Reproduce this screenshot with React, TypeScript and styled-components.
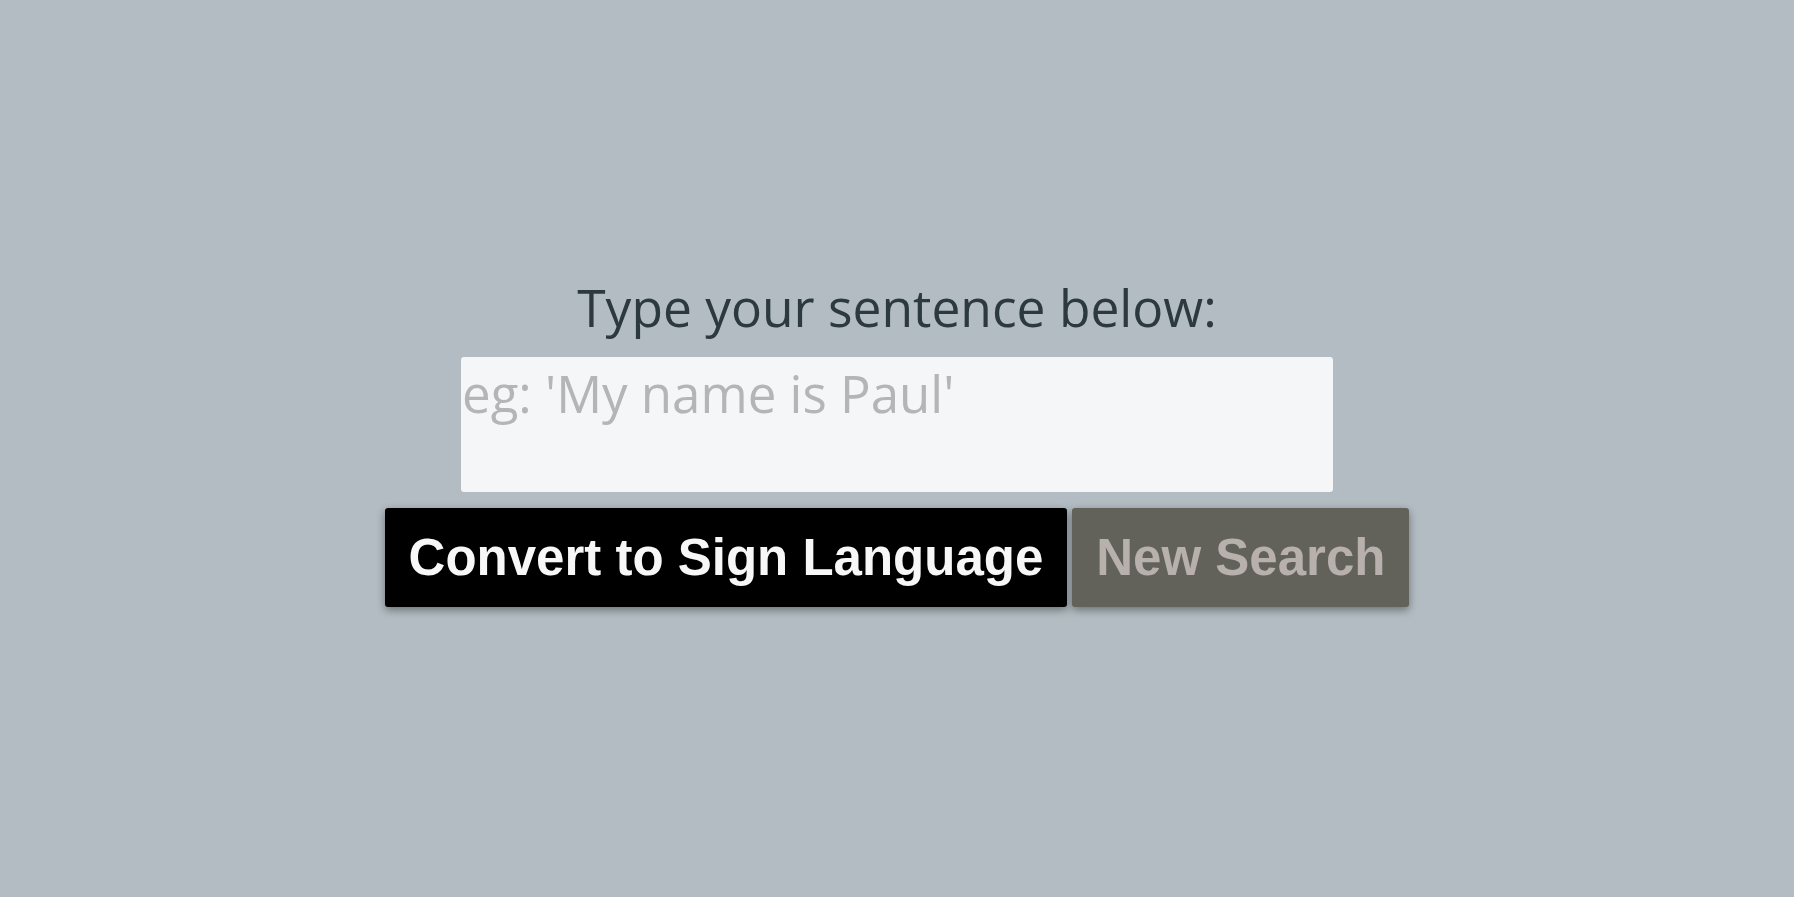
import React from "react";
import styled, { createGlobalStyle } from "styled-components";

const GlobalStyle = createGlobalStyle`
  html, body {
    margin: 0;
    padding: 0;
    background: #b2bcc2;
  }
  body {
    font-family: "Open Sans", "Liberation Sans", sans-serif;
  }
`;

const Page = styled.main`
  min-height: 897px;
  box-sizing: border-box;
  padding-top: 272px;
  display: flex;
  flex-direction: column;
  align-items: center;
  background: #b2bcc2;
`;

const Label = styled.label`
  font-family: "Open Sans", sans-serif;
  font-size: 51.5px;
  line-height: 70px;
  color: #2c393e;
  margin-bottom: 15px;
`;

const Input = styled.textarea`
  display: block;
  width: 872px;
  height: 135px;
  box-sizing: border-box;
  border: none;
  border-radius: 3px;
  background: #f5f6f7;
  padding: 1px 1px;
  margin: 0 0 16px 0;
  font-family: "Open Sans", sans-serif;
  font-size: 51px;
  line-height: normal;
  color: #333;
  resize: none;
  outline: none;
  overflow: hidden;
  &::placeholder {
    color: #b5b5b5;
  }
`;

const ButtonRow = styled.div`
  display: flex;
  gap: 5px;
`;

const Button = styled.button<{ $variant: "primary" | "secondary" }>`
  font-family: "Liberation Sans", Arial, sans-serif;
  font-weight: bold;
  font-size: 51px;
  line-height: normal;
  padding: 20px 24px;
  border: none;
  border-radius: 3px;
  cursor: pointer;
  box-shadow: 0 3px 8px rgba(0, 0, 0, 0.4);
  background: ${(p) => (p.$variant === "primary" ? "#000000" : "#62615a")};
  color: ${(p) => (p.$variant === "primary" ? "#f7f7f7" : "#b7b0ad")};
`;

export default function App() {
  return (
    <>
      <GlobalStyle />
      <Page>
        <Label htmlFor="sentence">Type your sentence below:</Label>
        <Input id="sentence" placeholder="eg: 'My name is Paul'" />
        <ButtonRow>
          <Button $variant="primary">Convert to Sign Language</Button>
          <Button $variant="secondary">New Search</Button>
        </ButtonRow>
      </Page>
    </>
  );
}
